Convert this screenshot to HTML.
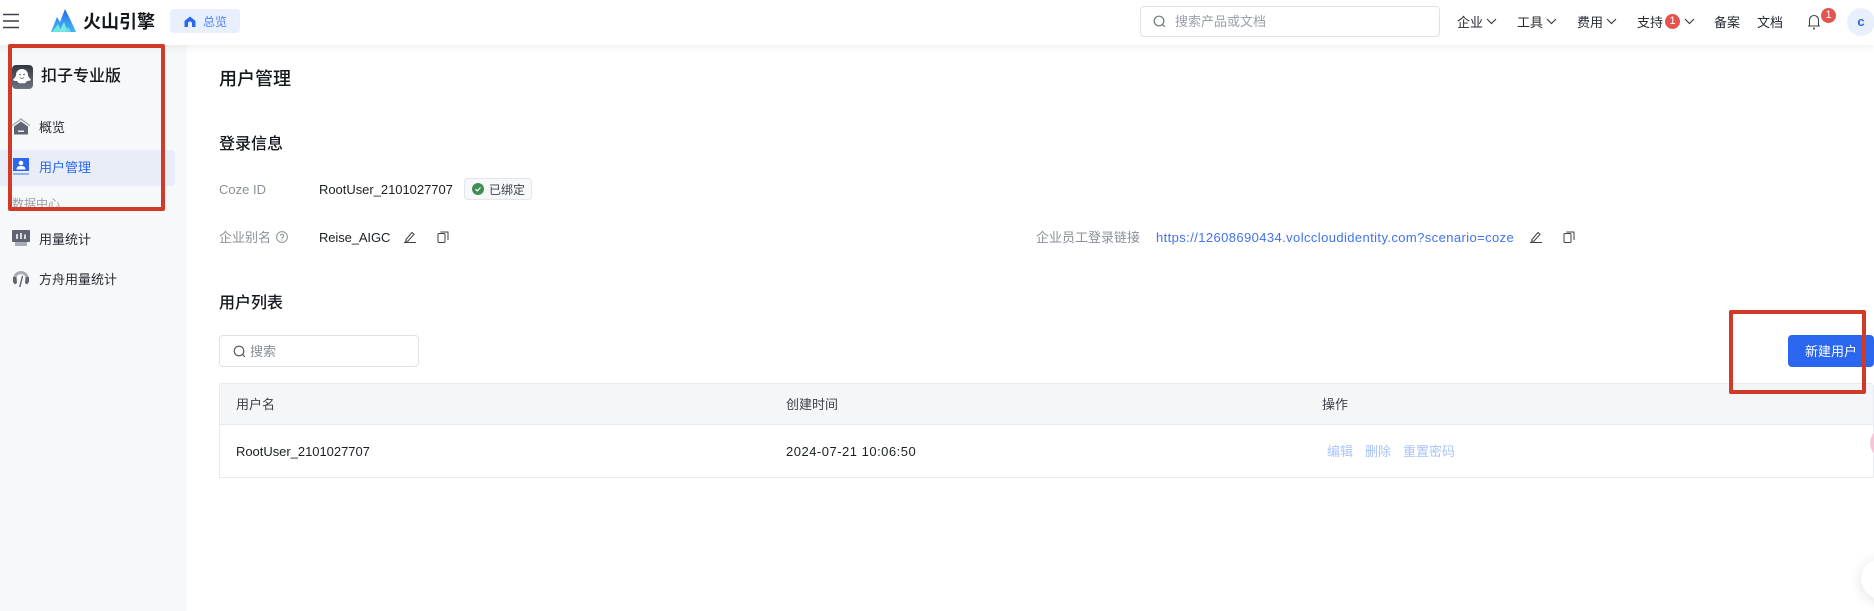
<!DOCTYPE html>
<html lang="zh"><head><meta charset="utf-8"><title>用户管理</title>
<style>
*{box-sizing:border-box}
html,body{margin:0;padding:0}
body{width:1874px;height:611px;position:relative;overflow:hidden;background:#fff;font-family:"Liberation Sans","Noto Sans CJK SC",sans-serif;font-size:13px;color:#1c2026}
.a{position:absolute;white-space:nowrap;line-height:20px}
svg{position:absolute;display:block}
.g{color:#8a8f99}
.n{color:#272b33}
.h{font-weight:500;color:#14171c}
.op{color:#a9c3fb}
.badge{position:absolute;background:#e5534f;color:#fff;border-radius:50%;text-align:center;font-size:11px;line-height:15px;width:15px;height:15px}
.red{position:absolute;border:4px solid #d03a26;border-radius:2px;z-index:5}
</style></head><body>
<div style="position:absolute;left:0;top:45px;width:187px;height:566px;background:#f6f8fa"></div>
<div style="position:absolute;left:0;top:0;width:1874px;height:45px;background:#fff;box-shadow:0 2px 8px rgba(30,40,60,.08);z-index:2"></div>
<div style="position:absolute;left:0;top:0;width:1874px;height:45px;z-index:3">
<svg style="left:3px;top:13px" width="16" height="16" viewBox="0 0 16 16"><path d="M0 1.500H16M0 8H16M0 14.500H16" stroke="#3c4149" stroke-width="1.500"/></svg>
<svg style="left:51px;top:9px" width="25" height="23" viewBox="0 0 25 23"><defs><linearGradient id="lg" x1="0" y1="0" x2="0" y2="1"><stop offset="0" stop-color="#1f6ae8"/><stop offset=".6" stop-color="#3b9cf0"/><stop offset="1" stop-color="#3fb6ee"/></linearGradient></defs><path d="M0 23L6 8l3 5 5-13 6 12 5 11z" fill="url(#lg)"/><path d="M1 23l6-8 4 8z" fill="#6fe3e0"/><path d="M8 23l5-10 4 10z" fill="#7be6e4"/><path d="M14 23l3-5 3 5z" fill="#68dbe6"/></svg>
<div class="a" style="left:83px;top:10px;font-size:18px;line-height:24px;font-weight:700;color:#14171c">火山引擎</div>
<div style="position:absolute;left:170px;top:9px;width:70px;height:24px;background:#e9f0fd;border-radius:4px"></div>
<svg style="left:184px;top:16px" width="12" height="11" viewBox="0 0 12 11"><path d="M0.500 5L6 0.500 11.500 5V11H8V7.500A2 2 0 0 0 4 7.500V11H.5z" fill="#2a66ee"/></svg>
<div class="a" style="left:203px;top:12px;font-size:12px;color:#4d7fff">总览</div>
<div style="position:absolute;left:1140px;top:6px;width:300px;height:31px;border:1px solid #dde1e9;border-radius:4px"></div>
<svg style="left:1153px;top:15px" width="13" height="13" viewBox="0 0 13 13"><circle cx="6" cy="6" r="4.800" fill="none" stroke="#70757e" stroke-width="1.200"/><path d="M9.500 9.500L11.800 11.800" stroke="#70757e" stroke-width="1.200"/></svg>
<div class="a g" style="left:1175px;top:12px;font-size:13px;color:#9aa0aa">搜索产品或文档</div>
<div class="a n" style="left:1457px;top:13px">企业</div>
<svg style="left:1486px;top:18px" width="11" height="7" viewBox="0 0 11 7"><path d="M1 1l4.500 4.500L10 1" fill="none" stroke="#3c4149" stroke-width="1.200"/></svg>
<div class="a n" style="left:1517px;top:13px">工具</div>
<svg style="left:1546px;top:18px" width="11" height="7" viewBox="0 0 11 7"><path d="M1 1l4.500 4.500L10 1" fill="none" stroke="#3c4149" stroke-width="1.200"/></svg>
<div class="a n" style="left:1577px;top:13px">费用</div>
<svg style="left:1606px;top:18px" width="11" height="7" viewBox="0 0 11 7"><path d="M1 1l4.500 4.500L10 1" fill="none" stroke="#3c4149" stroke-width="1.200"/></svg>
<div class="a n" style="left:1637px;top:13px">支持</div>
<div class="badge" style="left:1665px;top:14px">1</div>
<svg style="left:1684px;top:18px" width="11" height="7" viewBox="0 0 11 7"><path d="M1 1l4.500 4.500L10 1" fill="none" stroke="#3c4149" stroke-width="1.200"/></svg>
<div class="a n" style="left:1714px;top:13px">备案</div>
<div class="a n" style="left:1757px;top:13px">文档</div>
<svg style="left:1807px;top:13px" width="14" height="17" viewBox="0 0 14 17"><path d="M1 13h12M2.500 13V7a4.500 4.500 0 0 1 9 0v6" fill="none" stroke="#3c4149" stroke-width="1.100"/><circle cx="7" cy="15.500" r="1" fill="#3c4149"/></svg>
<div class="badge" style="left:1821px;top:8px">1</div>
<div style="position:absolute;left:1847px;top:8px;width:28px;height:28px;border-radius:50%;background:#e9f0fd;color:#2a66ee;font-weight:700;font-size:13px;line-height:27px;text-align:center">c</div>
</div>

<svg style="left:12px;top:65px" width="21" height="24" viewBox="0 0 21 24"><defs><linearGradient id="ap" x1="0" y1="0" x2="0" y2="1"><stop offset="0" stop-color="#33373f"/><stop offset="1" stop-color="#6f7480"/></linearGradient></defs><rect width="21" height="24" rx="4" fill="url(#ap)"/><path d="M10 4c4 0 6 3 6 6 0 2 2 3 3 5-2 1-3 1-4 1-1 2-3 3-5 2-2 1-4 0-5-2-2 0-3 0-4-1 1-2 3-3 3-5 0-3 2-6 6-6z" fill="#fff"/><circle cx="8" cy="9.500" r=".8" fill="#4a4f5c"/><circle cx="12" cy="9.500" r=".8" fill="#4a4f5c"/><path d="M8 12.500c1 1.200 3 1.200 4 0" stroke="#4a4f5c" fill="none" stroke-width=".8"/></svg>
<div class="a" style="left:41px;top:66px;font-size:16px;line-height:22px;font-weight:500;color:#14171c">扣子专业版</div>
<svg style="left:12px;top:118px" width="18" height="17" viewBox="0 0 18 17"><path d="M9 0L18 7v1.500L9 2 0 8.500V7z" fill="#a6abb4"/><path d="M2 8.500l7-5 7 5V16.500H2z" fill="#5f6470"/><rect x="6" y="12.500" width="6" height="1.500" fill="#e8eaef"/></svg>
<div class="a n" style="left:39px;top:118px">概览</div>
<div style="position:absolute;left:0;top:150px;width:175px;height:36px;background:#e8edf8;border-radius:0 4px 4px 0"></div>
<svg style="left:13px;top:158px" width="16" height="17" viewBox="0 0 16 17"><rect width="16" height="13" fill="#2a66ee"/><rect y="15" width="16" height="2" fill="#8fb0f5"/><circle cx="8" cy="5" r="2.300" fill="#fff"/><path d="M3.500 11.500c0-3 2-3.500 4.500-3.500s4.500 .5 4.500 3.500z" fill="#fff"/></svg>
<div class="a" style="left:39px;top:158px;color:#2a66ee">用户管理</div>
<div class="a" style="left:12px;top:194px;font-size:12px;color:#9aa0aa">数据中心</div>
<svg style="left:12px;top:230px" width="18" height="16" viewBox="0 0 18 16"><rect width="18" height="12" rx="1" fill="#5f6470"/><rect x="3" y="12" width="12" height="4" fill="#a6abb4"/><path d="M5 4v5M9 3v6M13 4.500v4.500" stroke="#fff" stroke-width="1.500"/></svg>
<div class="a n" style="left:39px;top:230px">用量统计</div>
<svg style="left:12px;top:269px" width="18" height="18" viewBox="0 0 18 18"><path d="M2.500 10a6.500 6.500 0 0 1 13 0" fill="none" stroke="#a6abb4" stroke-width="3"/><path d="M1 8h3.500l.5 6-2 1.500L1 13zM17 8h-3.500l-.5 6 2 1.500L17 13z" fill="#5f6470"/><path d="M10 6.500l1.200 .8L8.500 18H7z" fill="#5f6470"/></svg>
<div class="a n" style="left:39px;top:270px">方舟用量统计</div>

<div class="a" style="left:219px;top:66px;font-size:18px;line-height:26px;font-weight:500;color:#14171c">用户管理</div>
<div class="a h" style="left:219px;top:133px;font-size:16px;line-height:24px">登录信息</div>
<div class="a g" style="left:219px;top:180px">Coze ID</div>
<div class="a" style="left:319px;top:180px;letter-spacing:-.03px">RootUser_2101027707</div>
<div style="position:absolute;left:464px;top:178px;width:68px;height:22px;background:#f6f8fa;border:1px solid #e3e6ec;border-radius:4px"></div>
<svg style="left:472px;top:183px" width="12" height="12" viewBox="0 0 12 12"><circle cx="6" cy="6" r="6" fill="#3f8f55"/><path d="M3.500 6.200l1.800 1.700 3.200-3.400" fill="none" stroke="#fff" stroke-width="1.200"/></svg>
<div class="a" style="left:489px;top:180px;font-size:12px;color:#3c4149">已绑定</div>
<div class="a g" style="left:219px;top:228px">企业别名</div>
<svg style="left:276px;top:231px" width="12" height="12" viewBox="0 0 12 12"><circle cx="6" cy="6" r="5.400" fill="none" stroke="#8a8f99"/><path d="M4.400 4.700A1.600 1.600 0 1 1 6 6.500v1" fill="none" stroke="#8a8f99"/><circle cx="6" cy="9" r=".6" fill="#8a8f99"/></svg>
<div class="a" style="left:319px;top:228px;letter-spacing:-.1px">Reise_AIGC</div>
<svg style="left:404px;top:231px" width="12" height="12" viewBox="0 0 12 12"><path d="M2 8.500L8 1.500l2 1.800-6 6.700-2.300.5zM0 11.500h12" fill="none" stroke="#3c4149"/></svg>
<svg style="left:437px;top:231px" width="12" height="12" viewBox="0 0 12 12"><rect x="1" y="2.500" width="7" height="9" rx="1" fill="none" stroke="#3c4149"/><path d="M3.500 1H11V9" fill="none" stroke="#3c4149"/></svg>
<div class="a g" style="left:1036px;top:228px">企业员工登录链接</div>
<div class="a" style="left:1156px;top:228px;color:#3f73ee;letter-spacing:.4px">https://12608690434.volccloudidentity.com?scenario=coze</div>
<svg style="left:1530px;top:231px" width="12" height="12" viewBox="0 0 12 12"><path d="M2 8.500L8 1.500l2 1.800-6 6.700-2.300.5zM0 11.500h12" fill="none" stroke="#3c4149"/></svg>
<svg style="left:1563px;top:231px" width="12" height="12" viewBox="0 0 12 12"><rect x="1" y="2.500" width="7" height="9" rx="1" fill="none" stroke="#3c4149"/><path d="M3.500 1H11V9" fill="none" stroke="#3c4149"/></svg>
<div class="a h" style="left:219px;top:292px;font-size:16px;line-height:24px">用户列表</div>
<div style="position:absolute;left:219px;top:335px;width:200px;height:32px;border:1px solid #dde1e9;border-radius:4px"></div>
<svg style="left:233px;top:345px" width="13" height="13" viewBox="0 0 13 13"><circle cx="6" cy="6" r="4.800" fill="none" stroke="#4a4f58" stroke-width="1.100"/><path d="M9.500 9.500L11.800 11.800" stroke="#4a4f58" stroke-width="1.100"/></svg>
<div class="a" style="left:250px;top:342px;color:#8a8f99">搜索</div>
<div style="position:absolute;left:1788px;top:335px;width:86px;height:32px;background:#2a66ee;border-radius:4px;color:#fff;text-align:center;line-height:33px">新建用户</div>
<div style="position:absolute;left:219px;top:383px;width:1655px;height:95px;border:1px solid #e8eaef;border-radius:3px 3px 0 0"></div>
<div style="position:absolute;left:220px;top:384px;width:1653px;height:41px;background:#f5f6f8;border-bottom:1px solid #e8eaef"></div>
<div class="a" style="left:236px;top:395px;color:#3c4149">用户名</div>
<div class="a" style="left:786px;top:395px;color:#3c4149">创建时间</div>
<div class="a" style="left:1322px;top:395px;color:#3c4149">操作</div>
<div class="a" style="left:236px;top:442px;letter-spacing:-.03px">RootUser_2101027707</div>
<div class="a" style="left:786px;top:442px;letter-spacing:.5px">2024-07-21 10:06:50</div>
<div class="a op" style="left:1327px;top:442px">编辑</div>
<div class="a op" style="left:1365px;top:442px">删除</div>
<div class="a op" style="left:1403px;top:442px">重置密码</div>
<div style="position:absolute;left:1870px;top:428px;width:30px;height:30px;border-radius:50%;background:#f5c6d8"></div>
<div style="position:absolute;left:1861px;top:559px;width:40px;height:40px;border-radius:50%;background:#fff;box-shadow:0 2px 12px rgba(30,40,60,.14)"></div>
<div class="red" style="left:8px;top:44px;width:157px;height:167px"></div>
<div class="red" style="left:1729px;top:310px;width:137px;height:84px"></div>
</body></html>
